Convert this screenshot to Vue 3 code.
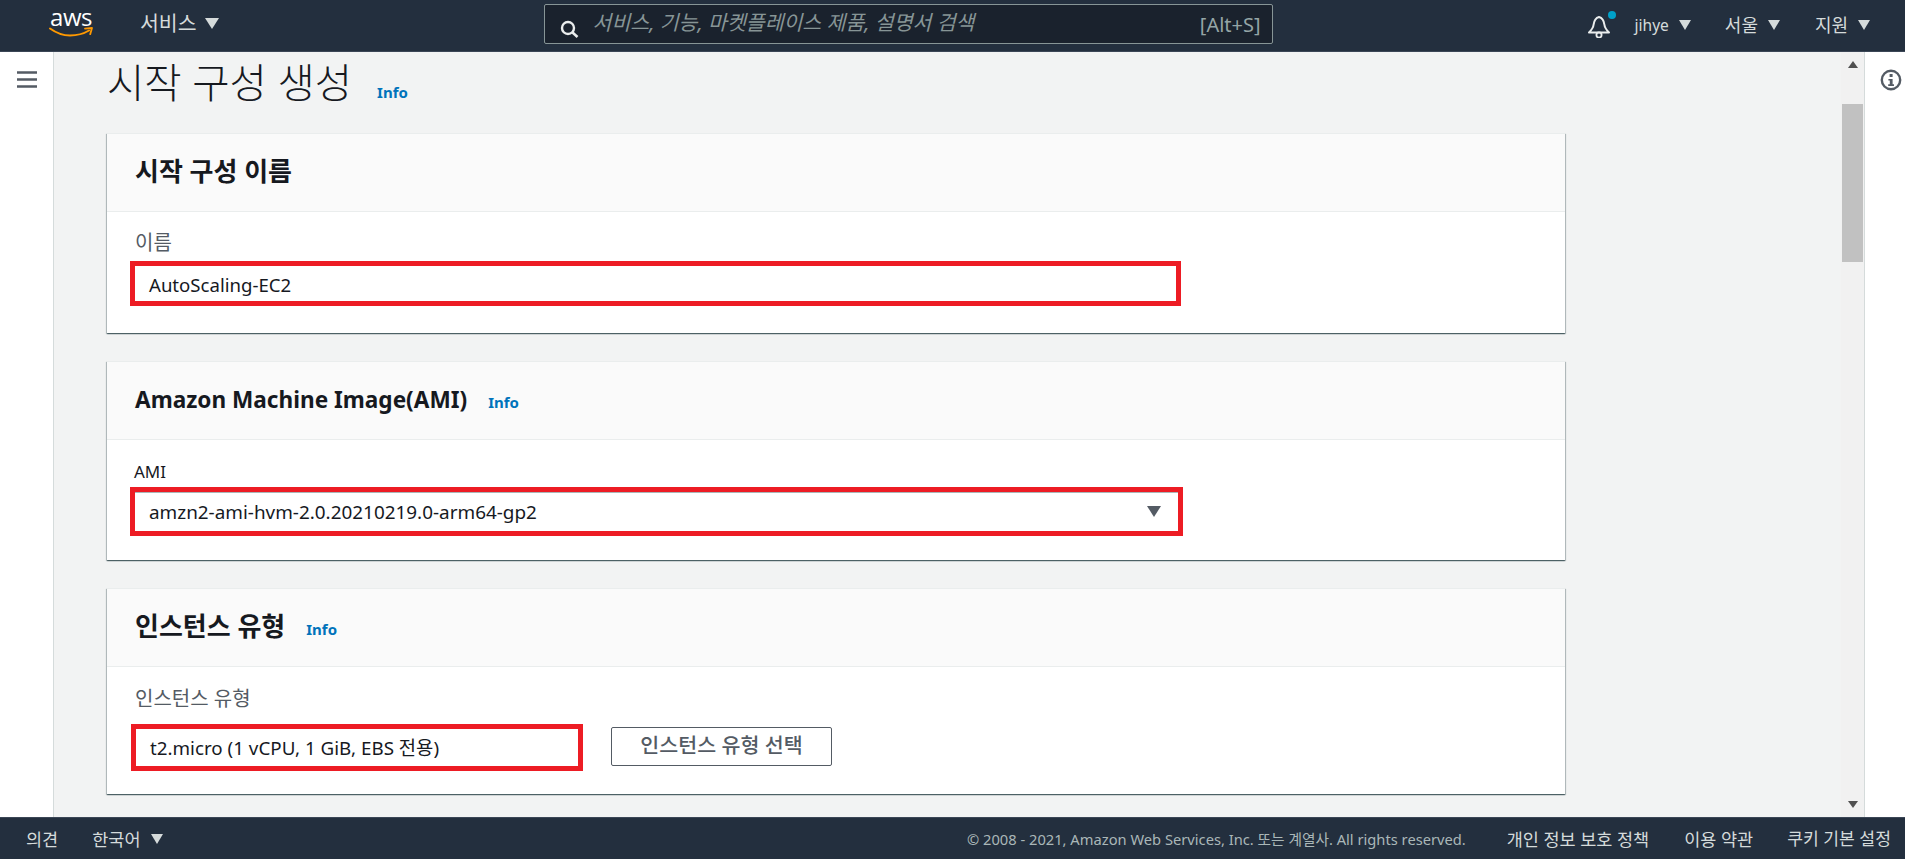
<script setup>
</script>

<template>
  <div class="page">
    <header class="top">
      <div class="logo">
        <span class="logo-text">aws</span>
        <svg class="smile" viewBox="0 0 44 10" width="44" height="10">
          <path d="M1 1.5C8 6.5 14 8.5 21 8.5C28 8.5 35 6.5 40 3.5" fill="none" stroke="#ff9900" stroke-width="2" stroke-linecap="round"/>
          <path d="M36 1.6L43 1L41.2 7.2" fill="none" stroke="#ff9900" stroke-width="1.8" stroke-linejoin="round" stroke-linecap="round"/>
        </svg>
      </div>
      <div class="services">서비스</div>
      <span class="tri tri-services"></span>
      <div class="search">
        <svg class="search-icon" viewBox="0 0 20 18" width="20" height="18">
          <circle cx="8" cy="8" r="6" fill="none" stroke="#eaeded" stroke-width="2.4"/>
          <path d="M12.5 12.5L17.5 17" stroke="#eaeded" stroke-width="2.6"/>
        </svg>
        <span class="placeholder">서비스, 기능, 마켓플레이스 제품, 설명서 검색</span>
        <span class="shortcut">[Alt+S]</span>
      </div>
      <div class="top-right">
        <div class="bell">
          <svg viewBox="0 0 24 24" width="24" height="24">
            <path d="M12 3C8 4 7 7 6.5 11C6.2 14 4.5 16 2 18.5H22C19.5 16 17.8 14 17.5 11C17 7 16 4 12 3Z" fill="none" stroke="#eaeded" stroke-width="2" stroke-linejoin="round"/>
            <circle cx="12" cy="21" r="2.6" fill="none" stroke="#eaeded" stroke-width="1.8"/>
          </svg>
          <span class="dot"></span>
        </div>
        <span class="menu menu-user">jihye</span><span class="tri tri-small"></span>
        <span class="menu menu-region">서울</span><span class="tri tri-small"></span>
        <span class="menu menu-help">지원</span><span class="tri tri-small"></span>
      </div>
    </header>

    <div class="middle">
      <aside class="side">
        <svg viewBox="0 0 20 17" width="20" height="17">
          <path d="M0 1.5H20M0 8.5H20M0 15.5H20" stroke="#545b64" stroke-width="2.4"/>
        </svg>
      </aside>

      <main class="content">
        <div class="page-title">
          <h1>시작 구성 생성</h1>
          <a class="info info-title">Info</a>
        </div>

        <section class="card card-name">
          <div class="card-head"><h2>시작 구성 이름</h2></div>
          <div class="card-body">
            <div class="label">이름</div>
            <div class="red red-name">AutoScaling-EC2</div>
          </div>
        </section>

        <section class="card card-ami">
          <div class="card-head">
            <h2 class="h2-latin">Amazon Machine Image(AMI)</h2>
            <a class="info">Info</a>
          </div>
          <div class="card-body">
            <div class="label label-dark">AMI</div>
            <div class="red red-ami">
              <span>amzn2-ami-hvm-2.0.20210219.0-arm64-gp2</span>
              <span class="tri tri-select"></span>
            </div>
          </div>
        </section>

        <section class="card card-type">
          <div class="card-head">
            <h2>인스턴스 유형</h2>
            <a class="info">Info</a>
          </div>
          <div class="card-body">
            <div class="label">인스턴스 유형</div>
            <div class="type-row">
              <div class="red red-type">t2.micro (1 vCPU, 1 GiB, EBS 전용)</div>
              <button class="btn" type="button">인스턴스 유형 선택</button>
            </div>
          </div>
        </section>
      </main>

      <div class="scrollbar">
        <span class="arrow arrow-up"></span>
        <span class="thumb"></span>
        <span class="arrow arrow-down"></span>
      </div>

      <aside class="tools">
        <svg viewBox="0 0 22 22" width="22" height="22">
          <circle cx="11" cy="11" r="9.2" fill="none" stroke="#545b64" stroke-width="2.4"/>
          <rect x="9.6" y="5" width="3" height="3" fill="#545b64"/>
          <path d="M8.4 10H12.6V15.2H14V17H8.2V15.2H9.8V11.6H8.4Z" fill="#545b64"/>
        </svg>
      </aside>
    </div>

    <footer class="bottom">
      <span class="f-link f-feedback">의견</span>
      <span class="f-link">한국어</span>
      <span class="tri tri-foot"></span>
      <span class="copy">© 2008 - 2021, Amazon Web Services, Inc. 또는 계열사. All rights reserved.</span>
      <span class="f-link f-privacy">개인 정보 보호 정책</span>
      <span class="f-link f-terms">이용 약관</span>
      <span class="f-link f-cookie">쿠키 기본 설정</span>
    </footer>
  </div>
</template>

<style>
html, body { margin: 0; padding: 0; overflow: hidden; }
</style>

<style scoped>
.page {
  width: 1905px;
  height: 859px;
  display: flex;
  flex-direction: column;
  overflow: hidden;
  font-family: "Noto Sans", "Noto Sans CJK KR", sans-serif;
  color: #16191f;
  background: #f2f3f3;
}

/* top bar */
.top {
  height: 52px;
  box-sizing: border-box;
  flex: none;
  display: flex;
  align-items: center;
  background: #232f3e;
  border-bottom: 1px solid #3b4656;
  color: #d5dbdb;
}
.logo {
  width: 44px;
  margin-left: 49px;
  height: 34px;
  display: flex;
  flex-direction: column;
  align-items: center;
  margin-top: -8px;
}
.logo-text {
  font-family: "Open Sans", sans-serif;
  font-size: 24px;
  line-height: 24px;
  color: #fff;
  letter-spacing: -0.5px;
}
.smile { margin-top: -2px; }
.services {
  margin-left: 47px;
  font-size: 20.5px;
  line-height: 24px;
  margin-top: -6px;
}
.tri {
  display: inline-block;
  width: 0;
  height: 0;
  border-style: solid;
  border-color: #d5dbdb transparent transparent transparent;
}
.tri-services { margin-left: 8px; border-width: 11px 7.5px 0; margin-top: -5px; }
.search {
  margin-left: 325px;
  width: 729px;
  height: 40px;
  box-sizing: border-box;
  margin-top: -3px;
  display: flex;
  align-items: center;
  background: #1a222d;
  border: 1px solid #879596;
  border-radius: 2px;
}
.search-icon { margin-left: 15px; margin-top: 10px; flex: none; }
.placeholder {
  margin-left: 13px;
  font-size: 20.5px;
  font-style: italic;
  color: #879596;
  margin-top: -6px;
}
.shortcut {
  margin-left: auto;
  margin-right: 11px;
  font-size: 20px;
  color: #95a5a6;
  margin-top: 0;
}
.top-right {
  display: flex;
  align-items: center;
  margin-left: 314px;
  margin-top: -2px;
}
.bell {
  position: relative;
  width: 24px;
  height: 24px;
  margin-top: 2px;
}
.dot {
  position: absolute;
  right: -5px;
  top: -3px;
  width: 8px;
  height: 8px;
  border-radius: 50%;
  background: #00a1c9;
}
.menu { font-size: 18px; line-height: 22px; }
.menu-user { margin-left: 24px; font-size: 15.5px; }
.menu-region { margin-left: 34px; }
.menu-help { margin-left: 35px; }
.tri-small { margin-left: 10px; border-width: 10px 6.5px 0; }

/* middle area */
.middle { flex: 1; display: flex; min-height: 0; }
.side {
  width: 53px;
  flex: none;
  background: #fff;
  border-right: 1px solid #d5dbdb;
  padding-top: 19px;
  box-sizing: content-box;
  display: flex;
  justify-content: center;
  align-items: flex-start;
}
.content {
  width: 1787px;
  flex: none;
  padding-left: 53px;
  box-sizing: border-box;
  overflow: hidden;
}
.page-title {
  height: 81px;
  display: flex;
  align-items: flex-start;
}
h1 {
  margin: 7px 0 0;
  font-size: 40.6px;
  line-height: 48px;
  font-weight: 300;
  color: #16191f;
}
.info {
  font-size: 15px;
  line-height: 18px;
  font-weight: 700;
  color: #0073bb;
}
.info-title { margin: 31px 0 0 25px; }

.card {
  width: 1458px;
  background: #fff;
  box-sizing: border-box;
  border-top: 1px solid #eaeded;
  box-shadow: 0 1px 1px 0 rgba(0, 28, 36, 0.5), 1px 1px 1px 0 rgba(0, 28, 36, 0.2), -1px 1px 1px 0 rgba(0, 28, 36, 0.2);
  margin-bottom: 28px;
}
.card-name { height: 200px; }
.card-ami { height: 199px; }
.card-type { height: 206px; }
.card-head {
  height: 78px;
  box-sizing: border-box;
  background: #fafafa;
  border-bottom: 1px solid #eaeded;
  padding-left: 28px;
  display: flex;
  align-items: center;
}
h2 {
  margin: -4px 0 0;
  font-size: 26px;
  line-height: 30px;
  font-weight: 700;
  color: #16191f;
}
.h2-latin { font-size: 22.6px; margin-top: -1px; }
.card-head .info { margin-left: 21px; margin-top: 2px; }
.card-body { padding: 18px 0 0 23px; }
.card-name .card-body { padding-top: 17px; }
.label {
  padding-left: 5px;
  font-size: 20px;
  line-height: 28px;
  color: #545b64;
}
.label-dark { color: #16191f; font-size: 17px; padding-left: 4px; }
.red {
  box-sizing: border-box;
  border: 5px solid #ed1c24;
  font-size: 18.6px;
  display: flex;
  align-items: center;
  padding-left: 14px;
  background: #fff;
  color: #16191f;
}
.red-name { width: 1051px; height: 45px; margin-top: 4px; padding-top: 2px; }
.red-ami {
  width: 1053px;
  height: 49px;
  margin-top: 1px;
  justify-content: space-between;
  padding-right: 17px;
  font-size: 18.9px;
  box-shadow: inset 0 1px 0 #aab7b8;
}
.tri-select { border-width: 11px 7px 0; border-top-color: #545b64; }
.type-row {
  display: flex;
  align-items: center;
  margin-top: 11px;
}
.red-type {
  width: 452px;
  height: 47px;
  margin-left: 1px;
  font-size: 18.8px;
  padding-bottom: 2px;
}
.btn {
  margin-left: 28px;
  width: 221px;
  height: 39px;
  margin-top: -2px;
  background: #fff;
  border: 1px solid #545b64;
  border-radius: 2px;
  font: 500 20.6px "Noto Sans", "Noto Sans CJK KR", sans-serif;
  line-height: 30px;
  color: #545b64;
  padding: 0 0 4px;
}

/* scrollbar */
.scrollbar {
  width: 23px;
  flex: none;
  display: flex;
  flex-direction: column;
  align-items: center;
  background: #f1f1f1;
  padding-top: 9px;
  padding-bottom: 9px;
  box-sizing: border-box;
}
.arrow { width: 0; height: 0; border-style: solid; }
.arrow-up { border-width: 0 5.5px 7px; border-color: transparent transparent #505050; flex: none; }
.arrow-down { border-width: 7px 5.5px 0; border-color: #505050 transparent transparent; margin-top: auto; flex: none; }
.thumb { width: 21px; height: 158px; background: #c1c1c1; margin-top: 36px; flex: none; }

.tools {
  width: 41px;
  flex: none;
  background: #fff;
  border-left: 1px solid #d5dbdb;
  box-sizing: border-box;
  padding: 17px 0 0 15px;
}

/* footer */
.bottom {
  height: 42px;
  flex: none;
  display: flex;
  align-items: center;
  background: #232f3e;
  color: #d5dbdb;
  border-top: 1px solid #3b4656;
  box-sizing: border-box;
}
.f-link { font-size: 17.5px; line-height: 22px; }
.f-feedback { margin-left: 26px; margin-right: 34px; }
.tri-foot { margin-left: 10px; border-width: 10px 6.5px 0; }
.copy { margin-left: auto; font-size: 14.7px; color: #aab7b8; }
.f-privacy { margin-left: 41px; }
.f-terms { margin-left: 35px; }
.f-cookie { margin-left: 34px; margin-right: 14px; font-size: 17.2px; }
</style>
